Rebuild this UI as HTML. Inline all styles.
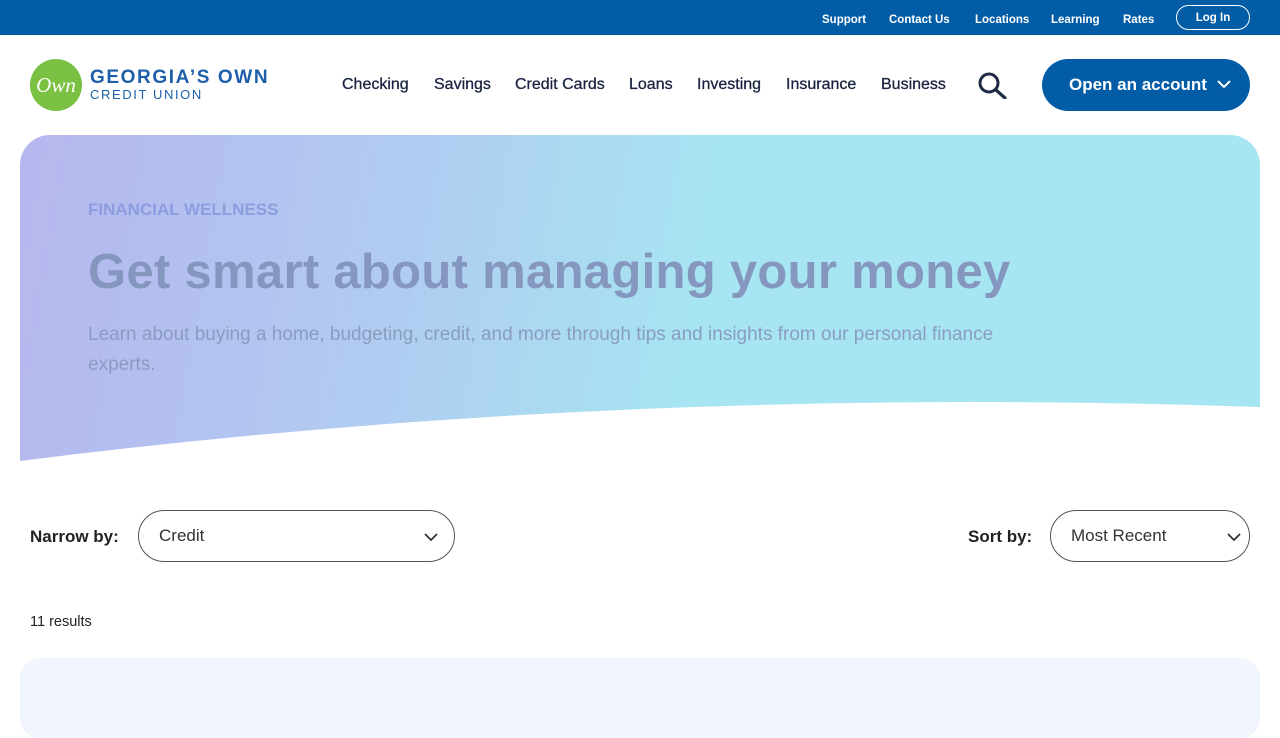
<!DOCTYPE html>
<html><head><meta charset="utf-8"><style>
*{margin:0;padding:0;box-sizing:border-box}
body{width:1280px;height:720px;overflow:hidden;background:#fff;font-family:"Liberation Sans",sans-serif;position:relative}
.top{position:absolute;left:0;top:0;width:1280px;height:35px;background:#025ca6}
.top a{position:absolute;top:14px;color:#fff;font-size:11.5px;font-weight:bold;text-decoration:none}
.login{position:absolute;left:1176px;top:5px;width:74px;height:25px;border:1px solid #fff;border-radius:13px;color:#fff;font-size:11.5px;font-weight:bold;text-align:center;line-height:24px}
.nav a{position:absolute;top:76px;font-size:16px;color:#1a2440;text-decoration:none;-webkit-text-stroke:0.3px #1a2440}
.btn{position:absolute;left:1042px;top:59px;width:208px;height:52px;background:#025ca6;border-radius:26px;color:#fff;font-weight:bold;font-size:17px;line-height:52px;padding-left:27px}
.hero{position:absolute;left:20px;top:135px;width:1240px;height:330px;border-radius:30px 30px 0 0;background:linear-gradient(100deg,#b6b6ee 0%,#b1cbf1 30%,#a6e5f1 55%,#a6e6f2 100%);overflow:hidden}
.sel{position:absolute;height:52px;border:1px solid #555;border-radius:26px;font-size:17px;color:#333;line-height:50px;padding-left:20px}
</style></head><body>
<div class="top">
<a style="left:822px">Support</a><a style="left:889px">Contact Us</a><a style="left:975px">Locations</a><a style="left:1051px">Learning</a><a style="left:1123px">Rates</a>
<div class="login">Log In</div>
</div>
<div style="position:absolute;left:30px;top:59px;width:52px;height:52px;border-radius:50%;background:#7ac143;color:#fff;font-family:'Liberation Serif',serif;font-style:italic;font-size:21px;line-height:52px;text-align:center">Own</div>
<div style="position:absolute;left:90px;top:67px;color:#1d5fa8;font-size:19px;font-weight:bold;letter-spacing:1.6px">GEORGIA’S OWN</div>
<div style="position:absolute;left:90px;top:87px;color:#1d5fa8;font-size:13px;letter-spacing:1.6px">CREDIT UNION</div>
<div class="nav">
<a style="left:342px">Checking</a><a style="left:434px">Savings</a><a style="left:515px">Credit Cards</a><a style="left:629px">Loans</a><a style="left:697px">Investing</a><a style="left:786px">Insurance</a><a style="left:881px">Business</a>
</div>
<svg style="position:absolute;left:977px;top:71px" width="32" height="28" viewBox="0 0 32 28"><circle cx="12" cy="12" r="9" fill="none" stroke="#1f2a44" stroke-width="3"/><path d="M19 19l9 8" stroke="#1f2a44" stroke-width="3.2" stroke-linecap="round"/></svg>
<div class="btn">Open an account <svg style="position:absolute;left:175px;top:20px" width="14" height="10" viewBox="0 0 14 10"><path d="M1 2l6 6 6-6" fill="none" stroke="#fff" stroke-width="2"/></svg></div>
<div class="hero">
<svg style="position:absolute;left:0;top:0" width="1240" height="330"><path d="M0 326 Q600 250 1240 272 L1240 330 L0 330Z" fill="#fff"/></svg>
<div style="position:absolute;left:68px;top:65px;font-size:17px;font-weight:bold;color:#8c9de0">FINANCIAL WELLNESS</div>
<div style="position:absolute;left:68px;top:109px;font-size:49px;font-weight:bold;color:#8596bf;letter-spacing:0.3px;white-space:nowrap">Get smart about managing your money</div>
<div style="position:absolute;left:68px;top:185px;width:975px;font-size:19px;line-height:30px;color:#8a9dc0">Learn about buying a home, budgeting, credit, and more through tips and insights from our personal finance experts.</div>
</div>
<div style="position:absolute;left:30px;top:527px;font-size:17px;font-weight:bold;color:#222">Narrow by:</div>
<div class="sel" style="left:138px;top:510px;width:317px">Credit<svg style="position:absolute;right:16px;top:21px" width="14" height="10" viewBox="0 0 14 10"><path d="M1 2l6 6 6-6" fill="none" stroke="#333" stroke-width="1.8"/></svg></div>
<div style="position:absolute;left:968px;top:527px;font-size:17px;font-weight:bold;color:#222">Sort by:</div>
<div class="sel" style="left:1050px;top:510px;width:200px">Most Recent<svg style="position:absolute;right:8px;top:21px" width="14" height="10" viewBox="0 0 14 10"><path d="M1 2l6 6 6-6" fill="none" stroke="#333" stroke-width="1.8"/></svg></div>
<div style="position:absolute;left:30px;top:614px;font-size:14.5px;color:#222">11 results</div>
<div style="position:absolute;left:20px;top:658px;width:1240px;height:80px;background:#f1f6fe;border-radius:20px"></div>
</body></html>
